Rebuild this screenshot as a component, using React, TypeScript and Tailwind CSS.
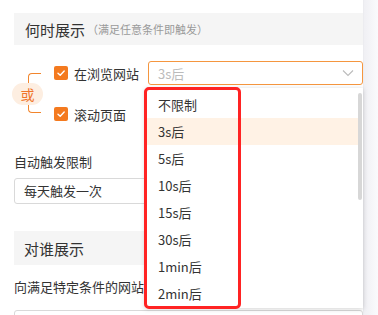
const OPTIONS = ['不限制', '3s后', '5s后', '10s后', '15s后', '30s后', '1min后', '2min后'];

function Check() {
  return (
    <span className="flex h-[14px] w-[14px] shrink-0 items-center justify-center rounded-[2px] bg-[#f47a1f]">
      <svg width="10" height="10" viewBox="0 0 10 10" fill="none">
        <path d="M2 5.2 4.2 7.2 8.2 3" stroke="#fff" strokeWidth="1.4" strokeLinecap="round" strokeLinejoin="round" />
      </svg>
    </span>
  );
}

export default function App() {
  return (
    <div className="relative flex h-[315px] w-[378px] overflow-hidden bg-white font-['Noto_Sans_CJK_SC',sans-serif] text-[#333]">
      <div className="w-[363px] shrink-0 pl-[14px] pt-[13px]">
        {/* 何时展示 */}
        <div className="flex h-[32px] items-center bg-[#f5f5f5] px-[11px]">
          <span className="text-[15px] leading-none">何时展示</span>
          <span className="ml-[2px] text-[11px] leading-none text-[#9a9a9a]">（满足任意条件即触发）</span>
        </div>

        <div className="mt-[16px] flex">
          <div className="flex w-[40px] shrink-0 flex-col pt-[12px]">
            <div className="ml-[14px] h-[10px] w-[13px] rounded-tl-[4px] border-l border-t border-[#f2852c]" />
            <div className="ml-[-2px] flex h-[22px] w-[31px] items-center justify-center rounded-full bg-[#fdeee1] text-[14px] leading-none text-[#f0752a]">
              或
            </div>
            <div className="ml-[14px] h-[8px] w-[13px] rounded-bl-[4px] border-b border-l border-[#f2852c]" />
          </div>
          <div className="flex-1">
            <div className="flex h-[24px] items-center">
              <Check />
              <span className="ml-[6px] w-[74px] text-[13px] leading-none">在浏览网站</span>
              <div className="flex h-[24px] flex-1 items-center justify-between rounded-[3px] border border-[#f5963f] pl-[9px] pr-[8px]">
                <span className="text-[13px] leading-none text-[#bbb]">3s后</span>
                <svg width="12" height="8" viewBox="0 0 12 8" fill="none">
                  <path d="M1 1.5 6 6.5 11 1.5" stroke="#bbb" strokeWidth="1.1" />
                </svg>
              </div>
            </div>
            <div className="mt-[17px] flex h-[24px] items-center">
              <Check />
              <span className="ml-[6px] text-[13px] leading-none">滚动页面</span>
            </div>
          </div>
        </div>

        {/* 自动触发限制 */}
        <div className="mt-[27px] text-[13px] leading-[18px]">自动触发限制</div>
        <div className="mt-[7px] flex h-[26px] items-center rounded-[3px] border border-[#d9d9d9] pl-[9px] text-[13px]">
          每天触发一次
        </div>

        {/* 对谁展示 */}
        <div className="mt-[27px] flex h-[34px] items-center bg-[#f5f5f5] px-[10px]">
          <span className="text-[15px] leading-none">对谁展示</span>
        </div>
        <div className="mt-[13px] text-[13px] leading-[18px]">向满足特定条件的网站访客展示</div>
        <div className="mt-[14px] h-[30px] rounded-[3px] border border-[#d9d9d9]" />
      </div>
      <div className="flex-1 border-l border-[#ececf0] bg-gradient-to-r from-[#f0f0f4] to-[#fafafc]" />

      {/* dropdown */}
      <div className="absolute left-[145px] top-[88px] h-[220px] w-[218px] bg-white pt-[3px] shadow-[0_1px_5px_rgba(0,0,0,0.18)]">
        {OPTIONS.map((o, i) => (
          <div
            key={o}
            className={`mr-[5px] flex h-[27px] items-center px-[13px] text-[13px] leading-none text-[#333] ${
              i === 1 ? 'bg-[#fff2e5]' : ''
            }`}
          >
            {o}
          </div>
        ))}
        <div className="absolute right-[1px] top-[5px] h-[107px] w-[4px] rounded-[2px] bg-[#d7d7d7]" />
      </div>

      {/* annotation */}
      <div className="absolute left-[144px] top-[87px] h-[222px] w-[97px] rounded-[5px] border-[3px] border-[#ff2323]" />
    </div>
  );
}
